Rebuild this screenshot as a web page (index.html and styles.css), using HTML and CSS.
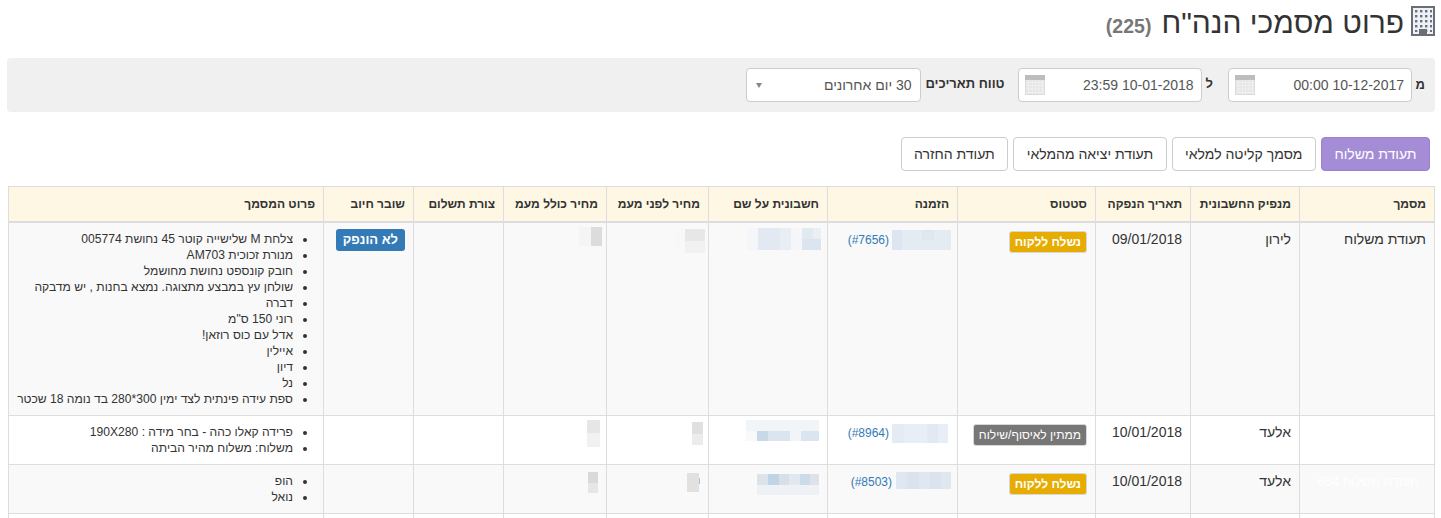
FILE: index.html
```html
<!DOCTYPE html>
<html lang="he" dir="rtl">
<head>
<meta charset="utf-8">
<title>פרוט מסמכי הנה"ח</title>
<link rel="stylesheet" href="styles.css">
</head>
<body>
<div class="page">
  <h1 class="title">
    <svg class="title-icon" width="24" height="30" viewBox="0 0 24 30">
      <defs><pattern id="win" width="5" height="5" patternUnits="userSpaceOnUse"><rect width="5" height="5" fill="#eef2f7"/><rect x="0" y="0" width="2.4" height="2.4" fill="#69707c"/></pattern></defs>
      <rect x="1" y="1" width="22" height="28" fill="#eef2f7" stroke="#6b6e74" stroke-width="2"/>
      <g transform="translate(4 4)"><rect width="17" height="22" fill="url(#win)"/></g>
      <rect x="8" y="23" width="8" height="6" fill="#6b6e74"/>
    </svg>
    <span>פרוט מסמכי הנה"ח</span>
    <small class="count">(225)</small>
  </h1>

  <form class="filters">
    <label class="filter-label from">מ</label>
    <div class="field date-field">10-12-2017 00:00
      <svg class="cal" width="20" height="20" viewBox="0 0 20 20"><use href="#cal-icon"/></svg>
    </div>
    <label class="filter-label to">ל</label>
    <div class="field date-field">10-01-2018 23:59
      <svg class="cal" width="20" height="20" viewBox="0 0 20 20"><use href="#cal-icon"/></svg>
    </div>
    <label class="filter-label range">טווח תאריכים</label>
    <div class="field select-field">30 יום אחרונים<span class="arrow"></span></div>
  </form>

  <svg class="defs" width="0" height="0">
    <defs>
      <pattern id="calgrid" width="3.4" height="3.4" patternUnits="userSpaceOnUse"><rect width="3.4" height="3.4" fill="#e6e6e6"/><path d="M0 0H3.4M0 0V3.4" stroke="#fafafa" stroke-width="0.9"/></pattern>
      <g id="cal-icon">
        <rect width="20" height="20" fill="#dcdcdc"/>
        <rect width="20" height="5" fill="#bdbdbd"/>
        <rect x="1" y="5" width="18" height="14" fill="url(#calgrid)"/>
      </g>
    </defs>
  </svg>

  <div class="tabs">
    <a class="btn btn-active">תעודת משלוח</a>
    <a class="btn">מסמך קליטה למלאי</a>
    <a class="btn">תעודת יציאה מהמלאי</a>
    <a class="btn">תעודת החזרה</a>
  </div>

  <table class="docs">
    <colgroup>
      <col class="c135"><col class="c109"><col class="c95"><col class="c138"><col class="c130"><col class="c119"><col class="c102"><col class="c103"><col class="c90"><col class="c90"><col class="c315">
    </colgroup>
    <thead>
      <tr>
        <th>מסמך</th><th>מנפיק החשבונית</th><th>תאריך הנפקה</th><th>סטטוס</th><th>הזמנה</th><th>חשבונית על שם</th><th>מחיר לפני מעמ</th><th>מחיר כולל מעמ</th><th>צורת תשלום</th><th>שובר חיוב</th><th>פרוט המסמך</th>
      </tr>
    </thead>
    <tbody>
      <tr class="row-a">
        <td>תעודת משלוח</td>
        <td>לירון</td>
        <td>09/01/2018</td>
        <td><span class="label label-sent">נשלח ללקוח</span></td>
        <td class="order">
          <svg class="blur-order" width="65" height="27" viewBox="0 0 65 27"><rect x="0" y="7" width="59" height="20" fill="#e5ebf3"/><rect x="30" y="7" width="12" height="10" fill="#dfe7f1"/><rect x="0" y="7" width="10" height="20" fill="#dde6f0"/></svg>
          <a class="link">(#7656)</a>
        </td>
        <td class="blur-cell"><svg width="118" height="40" viewBox="0 0 118 40"><rect x="38" y="5" width="74" height="22" fill="#f4f6f9"/><rect x="49" y="5" width="22" height="22" fill="#e2e9f2"/><rect x="71" y="5" width="11" height="22" fill="#e9eef4"/><rect x="93" y="5" width="11" height="11" fill="#e1e9f1"/><rect x="93" y="16" width="19" height="11" fill="#dbe5ef"/><rect x="104" y="5" width="8" height="11" fill="#ebeff4"/></svg></td>
        <td class="blur-cell"><svg width="101" height="40" viewBox="0 0 101 40"><rect x="67" y="6" width="11" height="24" fill="#f8f8f8"/><rect x="78" y="6" width="20" height="12" fill="#e7e7e7"/><rect x="78" y="18" width="20" height="12" fill="#f1f1f1"/></svg></td>
        <td class="blur-cell"><svg width="102" height="40" viewBox="0 0 102 40"><rect x="75" y="4" width="12" height="19" fill="#f5f5f5"/><rect x="87" y="4" width="11" height="19" fill="#dcdcdc"/></svg></td>
        <td></td>
        <td><span class="badge-blue">לא הונפק</span></td>
        <td class="details">
          <ul>
            <li>צלחת M שלישייה קוטר 45 נחושת 005774</li>
            <li>מנורת זכוכית AM703</li>
            <li>חובק קונספט נחושת מחושמל</li>
            <li>שולחן עץ במבצע מתצוגה. נמצא בחנות , יש מדבקה</li>
            <li>דברה</li>
            <li>רוני 150 ס"מ</li>
            <li>אדל עם כוס רוזאן!</li>
            <li>איילין</li>
            <li>דיון</li>
            <li>נל</li>
            <li>ספת עידה פינתית לצד ימין 300*280 בד נומה 18 שכטר</li>
          </ul>
        </td>
      </tr>
      <tr>
        <td></td>
        <td>אלעד</td>
        <td>10/01/2018</td>
        <td><span class="label label-wait">ממתין לאיסוף/שילוח</span></td>
        <td class="order">
          <svg class="blur-order" width="65" height="27" viewBox="0 0 65 27"><rect x="0" y="8" width="56" height="19" fill="#e8eef6"/><rect x="0" y="8" width="12" height="19" fill="#e4ebf4"/><rect x="35" y="8" width="11" height="19" fill="#e2e9f2"/></svg>
          <a class="link">(#8964)</a>
        </td>
        <td class="blur-cell"><svg width="118" height="40" viewBox="0 0 118 40"><rect x="37" y="4" width="73" height="11" fill="#f2f5f8"/><rect x="37" y="15" width="11" height="10" fill="#f7f9fb"/><rect x="48" y="15" width="11" height="10" fill="#c9d8e8"/><rect x="59" y="15" width="22" height="10" fill="#dbe5ef"/><rect x="81" y="15" width="11" height="10" fill="#f2f4f7"/><rect x="92" y="15" width="18" height="10" fill="#dbe5ef"/></svg></td>
        <td class="blur-cell"><svg width="101" height="40" viewBox="0 0 101 40"><rect x="85" y="6" width="11" height="12" fill="#e0e0e0"/><rect x="85" y="18" width="11" height="11" fill="#ececec"/></svg></td>
        <td class="blur-cell"><svg width="102" height="40" viewBox="0 0 102 40"><rect x="83" y="4" width="13" height="13" fill="#e5e6e6"/><rect x="83" y="17" width="13" height="14" fill="#f0f1f1"/></svg></td>
        <td></td>
        <td></td>
        <td class="details">
          <ul>
            <li>פרידה קאלו כהה - בחר מידה : 190X280</li>
            <li>משלוח: משלוח מהיר הביתה</li>
          </ul>
        </td>
      </tr>
      <tr class="row-a">
        <td class="ghost">תעודת משלוח 664</td>
        <td>אלעד</td>
        <td>10/01/2018</td>
        <td><span class="label label-sent">נשלח ללקוח</span></td>
        <td class="order">
          <svg class="blur-order" width="62" height="24" viewBox="0 0 62 24"><rect x="1" y="7" width="55" height="17" fill="#e1e7f0"/><rect x="12" y="7" width="12" height="17" fill="#d9e3ee"/><rect x="35" y="7" width="11" height="17" fill="#dbe3ee"/></svg>
          <a class="link">(#8503)</a>
        </td>
        <td class="blur-cell"><svg width="118" height="40" viewBox="0 0 118 40"><rect x="48" y="9" width="62" height="11" fill="#dce3ea"/><rect x="59" y="9" width="11" height="11" fill="#bfd5e5"/><rect x="70" y="9" width="10" height="11" fill="#d5e0eb"/><rect x="80" y="9" width="11" height="11" fill="#e3e8ee"/><rect x="91" y="9" width="10" height="11" fill="#cddbe9"/><rect x="48" y="20" width="62" height="10" fill="#eff2f5"/></svg></td>
        <td class="blur-cell"><svg width="101" height="40" viewBox="0 0 101 40"><rect x="80" y="8" width="12" height="19" fill="#e2e1df"/><rect x="92" y="13" width="1" height="6" fill="#9fc3e6"/></svg></td>
        <td class="blur-cell"><svg width="102" height="40" viewBox="0 0 102 40"><rect x="84" y="7" width="10" height="11" fill="#d8d9d9"/><rect x="84" y="18" width="10" height="10" fill="#e6e6e6"/></svg></td>
        <td></td>
        <td></td>
        <td class="details">
          <ul>
            <li>הופ</li>
            <li>נואל</li>
          </ul>
        </td>
      </tr>
      <tr>
        <td class="empty-row"></td><td></td><td></td><td></td><td></td><td></td><td></td><td></td><td></td><td></td><td></td>
      </tr>
    </tbody>
  </table>
</div>
</body>
</html>
```
FILE: styles.css
```css
html, body {
  margin: 0;
  padding: 0;
  height: 518px;
  overflow: hidden;
  background: #fff;
}

body {
  font-family: "Liberation Sans", Arial, sans-serif;
  font-size: 14px;
  line-height: 1.43;
  color: #333;
}

.page {
  padding: 0 6px 0 7px;
}

.title {
  display: flex;
  align-items: flex-start;
  gap: 7px;
  margin: 0;
  height: 58px;
  font-size: 30px;
  font-weight: 400;
  line-height: 36px;
  color: #333;
}

.title-icon {
  margin-top: 6px;
}

.title span {
  margin-top: 5px;
}

.count {
  margin: 8px 3px 0 0;
  font-size: 19.5px;
  font-weight: 700;
  color: #777;
}

.filters {
  display: flex;
  align-items: flex-start;
  height: 54px;
  box-sizing: border-box;
  padding: 10px 10px 0 0;
  background: #f0f0f0;
  border-radius: 4px;
}

.filter-label {
  font-size: 13px;
  font-weight: 700;
  line-height: 34px;
}

.filter-label.from {
  width: 13px;
}

.filter-label.to {
  margin-top: -1px;
  padding: 0 15px 0 4px;
}

.filter-label.range {
  margin-top: -1px;
  padding: 0 13px 0 4px;
}

.field {
  position: relative;
  box-sizing: border-box;
  height: 34px;
  padding: 0 7px;
  border: 1px solid #ccc;
  border-radius: 4px;
  background: #fff;
  color: #555;
  line-height: 32px;
}

.date-field {
  width: 184px;
}

.select-field {
  width: 175px;
  padding-right: 9px;
}

.cal {
  position: absolute;
  top: 6px;
  left: 6px;
}

.arrow {
  position: absolute;
  top: 14px;
  left: 9px;
  border-style: solid;
  border-width: 5px 3.5px 0;
  border-color: #888 transparent transparent;
}

.defs {
  position: absolute;
}

.tabs {
  display: flex;
  gap: 5px;
  margin: 25px 5px 15px 0;
}

.btn {
  box-sizing: border-box;
  height: 34px;
  padding: 0 12.5px;
  border: 1px solid #ccc;
  border-radius: 4px;
  background: #fff;
  color: #333;
  line-height: 32px;
}

.btn-active {
  background: #a58cd6;
  border-color: #9a80cf;
  color: #fff;
}

.docs {
  table-layout: fixed;
  width: 1426px;
  margin: 0;
  border-collapse: collapse;
}

.c135 { width: 135px; }
.c109 { width: 109px; }
.c95 { width: 95px; }
.c138 { width: 138px; }
.c130 { width: 130px; }
.c119 { width: 119px; }
.c102 { width: 102px; }
.c103 { width: 103px; }
.c90 { width: 90px; }
.c315 { width: 315px; }

.docs th,
.docs td {
  border: 1px solid #ddd;
  padding: 8px;
  vertical-align: top;
  text-align: right;
}

.docs th {
  height: 18px;
  border-bottom-width: 2px;
  background: #fdf7e3;
  font-size: 12px;
  font-weight: 700;
  line-height: 18px;
  white-space: nowrap;
}

.docs td {
  line-height: 17px;
}

.row-a td {
  background: #f9f9f9;
}

.docs .ghost {
  padding-right: 15px;
  color: #fff;
  font-size: 13px;
}

.docs .empty-row {
  height: 20px;
}

.label {
  display: inline-block;
  box-sizing: border-box;
  height: 22px;
  padding: 0 5px;
  border: 1px solid #d8d8d8;
  border-radius: 3px;
  color: #fff;
  font-size: 12px;
  font-weight: 700;
  line-height: 20px;
  vertical-align: top;
  white-space: nowrap;
}

.label-sent {
  background: #e6ac00;
}

.label-wait {
  background: #777;
  font-weight: 400;
}

.badge-blue {
  display: inline-block;
  height: 22px;
  padding: 0 7px;
  margin-top: -2px;
  border-radius: 3px;
  background: #337ab7;
  color: #fff;
  font-size: 13px;
  font-weight: 700;
  line-height: 22px;
  vertical-align: top;
}

.docs .order {
  padding: 0;
  white-space: nowrap;
}

.order svg,
.blur-cell svg {
  display: block;
}

.order .blur-order {
  float: right;
}

.link {
  float: right;
  margin: 6px 3px 0 0;
  color: #337ab7;
  font-size: 12px;
  line-height: 22px;
}

.docs .blur-cell {
  padding: 0;
}

.details ul {
  margin: 0;
  padding: 0 22px 0 0;
  font-size: 12.1px;
  line-height: 16px;
}

.docs .details {
  line-height: 16px;
}
```
